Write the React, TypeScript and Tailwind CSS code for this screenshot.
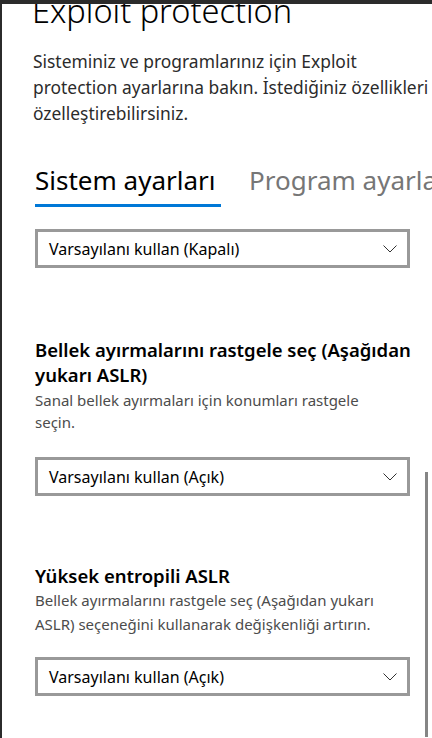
import React from 'react';

const font = { fontFamily: '"Noto Sans", "Open Sans", sans-serif' };

function Chevron() {
  return (
    <svg width="14" height="8" viewBox="0 0 14 8" className="shrink-0">
      <path d="M0.5 0.5 L7 7 L13.5 0.5" fill="none" stroke="#333" strokeWidth="1" />
    </svg>
  );
}

function Dropdown({ value }: { value: string }) {
  return (
    <div className="w-[375px] h-[39px] border-[3px] border-[#999999] bg-white flex items-center justify-between pl-[11px] pr-[10px]">
      <span className="text-[16px] text-black leading-none">{value}</span>
      <Chevron />
    </div>
  );
}

export default function App() {
  return (
    <div
      style={font}
      className="relative w-[432px] h-[738px] overflow-hidden bg-white border-t-4 border-l-2 border-[#2b2b2b]"
    >
      <div className="pl-[33px] flex flex-col">
        <h1 className="-mt-[11px] -ml-[3px] text-[32.5px] leading-[36px] font-light text-black whitespace-nowrap">
          Exploit protection
        </h1>

        <p className="mt-[19px] -ml-[2px] text-[17.4px] leading-[26px] text-[#2b2b2b] whitespace-nowrap">
          Sisteminiz ve programlarınız için Exploit
          <br />
          protection ayarlarına bakın. İstediğiniz özellikleri
          <br />
          özelleştirebilirsiniz.
        </p>

        <div className="mt-[37px] flex items-start gap-[28px] whitespace-nowrap">
          <div className="flex flex-col">
            <span className="text-[26px] leading-[34px] text-black">Sistem ayarları</span>
            <span className="mt-[7px] h-[3px] w-[186px] bg-[#0078d7]" />
          </div>
          <span className="text-[26px] leading-[34px] text-[#767676]">Program ayarları</span>
        </div>

        <div className="mt-[22px]">
          <Dropdown value="Varsayılanı kullan (Kapalı)" />
        </div>

        <h2 className="mt-[69px] text-[18.5px] leading-[25px] font-semibold text-black whitespace-nowrap">
          Bellek ayırmalarını rastgele seç (Aşağıdan
          <br />
          yukarı ASLR)
        </h2>
        <p className="mt-[2px] text-[15px] leading-[22px] text-[#4c4c4c] whitespace-nowrap">
          Sanal bellek ayırmaları için konumları rastgele
          <br />
          seçin.
        </p>
        <div className="mt-[24px]">
          <Dropdown value="Varsayılanı kullan (Açık)" />
        </div>

        <h2 className="mt-[67px] text-[18.5px] leading-[25px] font-semibold text-black whitespace-nowrap">
          Yüksek entropili ASLR
        </h2>
        <p className="text-[15px] leading-[24px] text-[#4c4c4c] whitespace-nowrap">
          Bellek ayırmalarını rastgele seç (Aşağıdan yukarı
          <br />
          ASLR) seçeneğini kullanarak değişkenliği artırın.
        </p>
        <div className="mt-[21px]">
          <Dropdown value="Varsayılanı kullan (Açık)" />
        </div>
      </div>

      <div className="absolute left-[423px] top-[468px] w-[3px] h-[265px] bg-[#858585]" />
    </div>
  );
}
